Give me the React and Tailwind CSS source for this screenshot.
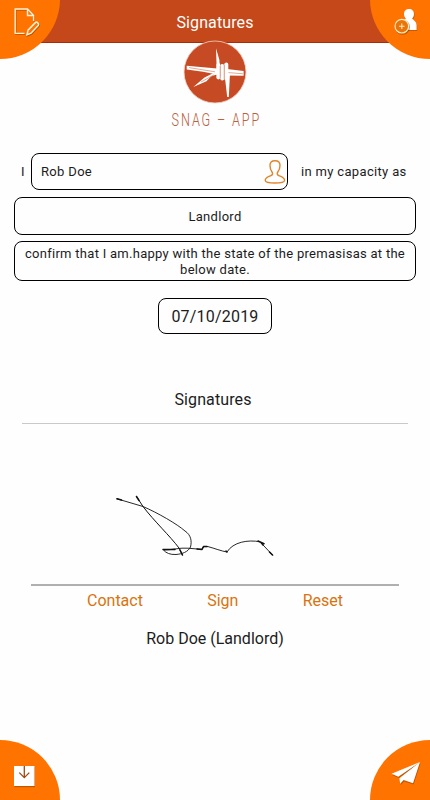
const actions = ["Contact", "Sign", "Reset"];

/* ---------- CORNER BUTTON ---------- */
function CornerButton({ label, className, children }) {
  return (
    <button aria-label={label} className={`absolute h-[60px] w-[60px] bg-[#ff7300] ${className}`}>
      <svg viewBox="0 0 60 60" className="h-full w-full overflow-visible" fill="none">
        {children}
      </svg>
    </button>
  );
}

function Logo() {
  return (
    <svg viewBox="0 0 96 90" className="h-[90px] w-[96px]" role="img" aria-label="Snag-App">
      <circle cx="48" cy="32" r="31" fill="#c64b24" stroke="#f3d3c8" strokeWidth="0.8" />
      {/* barbed wire */}
      <g fill="#fff">
        <path d="M19.7 25.8 L50 28.6 L50 34.4 L36 31.8 L19.7 29.6 Z" />
        <path d="M50 31.2 L37.5 37.4 L26.3 46.9 L39.5 41.2 L44 36.4 L51 34 Z" />
        <path d="M49 8.3 L52.4 20 L53.2 38 L50 38 Z" />
        <rect x="49.4" y="23" width="3.8" height="16.4" rx="1.8" />
        <rect x="53.3" y="24" width="3.9" height="16.4" rx="1.9" />
        <rect x="57.3" y="22.6" width="4" height="18" rx="2" />
        <path d="M58 38 L63 33 L61.8 57 L60.2 57 Z" />
        <path d="M60 29 L76.6 31 L76.6 35.8 L60 35.4 Z" />
      </g>
      <path
        d="M22 27.6 L48 31.8 M34 42 L47 34.8 M53.2 26 V38 M57.2 25 V39 M61.5 32.6 L76 33.8"
        stroke="#cf6f4c"
        strokeWidth="0.6"
        fill="none"
      />
      <g transform="translate(4.6 85.5) scale(0.68 1)">
        <text className="fill-[#b9603f] text-[18.6px] font-light" textLength="129" lengthAdjust="spacing">
          SNAG – APP
        </text>
      </g>
    </svg>
  );
}

function UserIcon() {
  return (
    <svg viewBox="0 0 22 26" className="h-[26px] w-[22px]" fill="none" stroke="#e0842a" strokeWidth="1.4">
      <path d="M11 1.8 C7.4 1.8 5.9 3.6 6 6.4 C6 10 6.8 11.4 8 13 C9 14.4 8.8 15.8 7 16.6 C4.4 17.8 1.2 18.6 1.2 21.2 C1.2 23 5 24 11 24 C17 24 20.6 23 20.6 21.2 C20.6 18.6 17.4 17.8 14.8 16.6 C13 15.8 12.8 14.4 13.8 13 C15 11.4 16 10 16 6.4 C16 3.6 14.6 1.8 11 1.8 Z" />
    </svg>
  );
}

function Signature() {
  return (
    <svg viewBox="0 0 190 90" className="h-[90px] w-[190px]" fill="none" stroke="#111" strokeLinecap="round" strokeLinejoin="round">
      <path
        d="M17 17.8 L43 25.5 C58 32 77 43 85 50 C91 54 92 60 90.5 66 C88 71 82 73 76 73.5 C70 73.8 66 72 63.5 69 C72 69 80 66.5 88 67.2 L102 68.4 L103.5 65.6 L108 65.6 C115 67.5 121 70 127 71 C133 61 148 58.5 160 60.8 L164 65 L172.5 74"
        strokeWidth="0.9"
      />
      <path d="M36.5 15.5 L43 25.5 C54 40 70 55 79 67 L82.5 74" strokeWidth="1" />
      <path
        d="M17 17.8 L21.5 19 M36.5 15.5 L39 19.5 M63 68.6 L75 68.4 M80 69 L82.4 74 M97 68 L102 68.4 L103.5 65.6 L107 65.6 M126 70 L127 71 M158 60 L164 62.6 M161 61.6 L163 64 M169.5 71 L172.5 74"
        strokeWidth="1.5"
      />
    </svg>
  );
}

export default function App() {
  return (
    <div className="relative flex h-[800px] w-[430px] flex-col items-center overflow-hidden bg-[#fefefe] font-['Roboto',sans-serif] text-[#1c1c1c]">
      {/* HEADER */}
      <header className="flex h-[43px] w-full shrink-0 items-center justify-center border-b border-[#a62c0c] bg-[#c5481a] pt-[3px] text-[16px] tracking-[0.1px] text-white">
        Signatures
      </header>

      <div className="-mt-[3px] h-[90px]">
        <Logo />
      </div>

      {/* DECLARATION */}
      <div className="mt-[23px] flex h-[37px] w-full items-center pl-[20px] text-[13px] tracking-[0.33px]">
        <span className="w-[11px] pt-px pl-px">I</span>
        <div className="flex h-full w-[257px] items-center justify-between rounded-[8px] border border-black pl-[9px] pr-px">
          <span className="pt-px">Rob Doe</span>
          <UserIcon />
        </div>
        <span className="ml-[13px] pt-px whitespace-nowrap">in my capacity as</span>
      </div>
      <div className="mt-[7px] flex h-[38px] w-[402px] items-center justify-center rounded-[8px] border border-black pt-px text-[13px] tracking-[0.3px]">
        Landlord
      </div>
      <div className="mt-[6px] flex h-[40px] w-[402px] items-center justify-center rounded-[8px] border border-black pt-px text-center text-[13px] leading-[16px] tracking-[0.28px]">
        <p className="whitespace-nowrap">
          confirm that I am.happy with the state of the premasisas at the
          <br />
          below date.
        </p>
      </div>
      <div className="mt-[17px] flex h-[36px] w-[114px] items-center justify-center rounded-[8px] border border-black pt-px text-[16px] tracking-[0.2px]">
        07/10/2019
      </div>

      {/* SIGNATURES */}
      <h2 className="mt-[54px] mr-[4px] text-[16px] leading-6 tracking-[0.1px]">Signatures</h2>
      <hr className="mt-[11px] w-[386px] border-[#c9c9c9]" />
      <div className="mt-[57px] mr-[40px]">
        <Signature />
      </div>
      <div className="mt-[13px] h-[1.5px] w-[368px] bg-[#b0b0b0]" />
      <div className="mt-[3.5px] flex h-6 w-[256px] items-center justify-between text-[16px] text-[#d9730d]">
        {actions.map((a) => (
          <button key={a}>{a}</button>
        ))}
      </div>
      <p className="mt-[14px] text-[16px] leading-6">Rob Doe (Landlord)</p>

      {/* CORNERS */}
      <CornerButton label="Edit document" className="-top-px left-0 rounded-br-full">
        <g stroke="#7a3300" strokeOpacity="0.4" strokeWidth="1.4" transform="translate(0.7 1)">
          <path d="M33.6 21.5 V16.5 L27.5 10 H15.2 V34.4 H24.5" />
        </g>
        <path d="M33.6 22 V16.5 L27.5 10 H15.2 V34.4 H24.5 M27.5 10 V16.5 H33.6" stroke="#fff3d6" strokeWidth="1.4" />
        <path d="M27 35.8 L28 31.2 L35.6 23.4 C36.8 22.4 39.4 24.6 38.4 26.2 L31 34.2 Z" stroke="#7a3300" strokeOpacity="0.5" strokeWidth="1.6" transform="translate(0.6 0.8)" />
        <path d="M27 35.8 L28 31.2 L35.6 23.4 C36.8 22.4 39.4 24.6 38.4 26.2 L31 34.2 Z" fill="#ff7300" stroke="#fff3d6" strokeWidth="1.5" />
      </CornerButton>

      <CornerButton label="Add contact" className="-top-px right-0 rounded-bl-full">
        <path d="M39 10 C42 10 44 12 44 15 C44 17.2 43 18.3 42.2 19.6 C43.6 21.6 46.6 22.6 46.6 26 V31 H31 V26 C31 22.6 34.6 21.6 35.8 19.6 C35 18.3 34 17.2 34 15 C34 12 36 10 39 10 Z" fill="#8a3900" opacity="0.45" transform="translate(0.6 1)" />
        <path d="M39 10 C42 10 44 12 44 15 C44 17.2 43 18.3 42.2 19.6 C43.6 21.6 46.6 22.6 46.6 26 V31 H31 V26 C31 22.6 34.6 21.6 35.8 19.6 C35 18.3 34 17.2 34 15 C34 12 36 10 39 10 Z" fill="#fff" />
        <circle cx="32.4" cy="28.1" r="7" stroke="#8a3900" strokeOpacity="0.5" strokeWidth="1.4" />
        <circle cx="31.8" cy="27.2" r="6.8" fill="#e8740a" stroke="#ffe9bd" strokeWidth="1.2" />
        <path d="M31.8 24.4 V30 M29 27.2 H34.6" stroke="#ffe9bd" strokeWidth="1.1" />
      </CornerButton>

      <CornerButton label="Save" className="bottom-0 left-0 rounded-tr-full">
        <rect x="14.5" y="27.2" width="20.5" height="20" fill="#8a3900" opacity="0.5" />
        <rect x="14" y="26" width="20.5" height="20" fill="#fff" />
        <path d="M24.3 26 V37.4 M19.3 32.6 L24.3 37.6 L29.3 32.6" stroke="#a04a10" strokeWidth="1.3" />
      </CornerButton>

      <CornerButton label="Send" className="right-0 bottom-0 rounded-tl-full">
        <g transform="translate(0.6 1.2)" fill="#8a3900" opacity="0.5">
          <path d="M50 22 L21.5 33.8 L28.3 36.8 Z M50 22 L29.4 38.2 L30.2 43.8 L33.6 40.2 L43 43.4 Z" />
        </g>
        <path d="M50 22 L21.5 33.8 L28.3 36.8 Z M50 22 L29.4 38.2 L30.2 43.8 L33.6 40 L43 43.2 Z" fill="#fff" />
      </CornerButton>
    </div>
  );
}
